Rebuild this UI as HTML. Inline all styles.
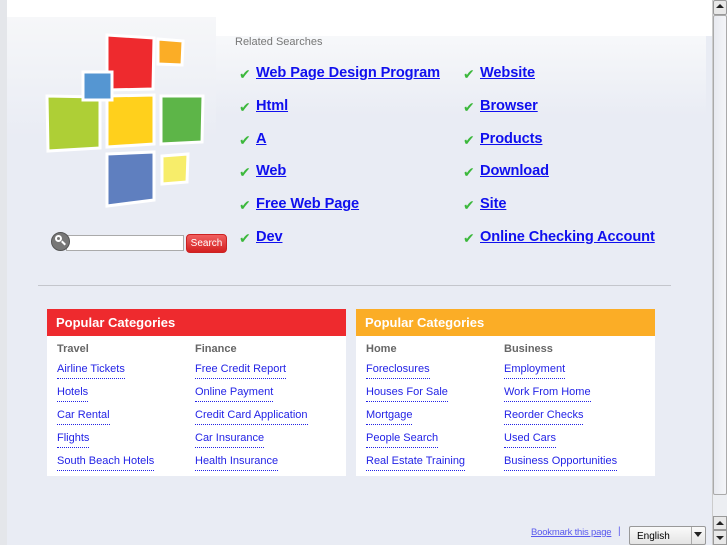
<!DOCTYPE html>
<html><head><meta charset="utf-8"><style>
*{margin:0;padding:0;box-sizing:border-box}
body{width:727px;height:545px;overflow:hidden;background:#e9ecf4;font-family:"Liberation Sans","DejaVu Sans",sans-serif;position:relative}
.a{position:absolute}
.rs{font-size:14.6px;font-weight:bold;color:#1010ee;text-decoration:underline;white-space:nowrap;letter-spacing:-0.1px}
.ck{color:#3cb83c;font-size:14px;font-weight:bold}
.box{position:absolute;top:309px;width:299px;height:167px;background:#fff}
.hd{height:27px;color:#fff;font-weight:bold;font-size:13px;padding:6px 0 0 9px}
.col{position:absolute;top:34px;font-size:11px}
.col b{display:block;color:#666;height:19px;font-size:11px}
.col a{display:block;color:#2323e6;text-decoration:none;border-bottom:1px dotted #2323e6;width:max-content;height:17px;margin-bottom:6px;line-height:15px}
</style></head><body>
<div class="a" style="left:0;top:0;width:712px;height:36px;background:#fff"></div>
<div class="a" style="left:0;top:0;width:7px;height:545px;background:#e4e6ea"></div>
<div class="a" style="left:7px;top:17px;width:209px;height:120px;background:linear-gradient(#f6f7f9,#e9ecf4)"></div>
<div class="a" style="left:216px;top:36px;width:490px;height:80px;background:linear-gradient(#f7f8fa,#e9ecf4)"></div>
<svg class="a" style="left:40px;top:30px" width="175" height="185" viewBox="0 0 175 185">
<g stroke="#fff" stroke-width="3">
<polygon points="67,5 114,8 113,59 67,60" fill="#ee2a2e"/>
<polygon points="118,9 143,11 142,35 118,34" fill="#fbad26"/>
<polygon points="7,66 60,67 60,118 8,121" fill="#aecf36"/>
<polygon points="67,66 114,65 114,114 67,117" fill="#ffd01c"/>
<polygon points="43,42 72,42 72,70 43,70" fill="#5596d2"/>
<polygon points="121,66 163,66 162,112 121,114" fill="#5db548"/>
<polygon points="67,124 114,122 114,170 67,176" fill="#5f7fbf"/>
<polygon points="122,126 148,124 147,152 122,154" fill="#f7ed6a"/>
</g></svg>
<div class="a" style="left:66px;top:235px;width:118px;height:16px;background:#fff;border:1px solid #aaa"></div>
<div class="a" style="left:51px;top:232px;width:19px;height:19px;border-radius:50%;background:#777;border:1px solid #555"></div>
<div class="a" style="left:55px;top:235px;width:7px;height:7px;border-radius:50%;border:2px solid #fff"></div>
<div class="a" style="left:61px;top:242px;width:5px;height:2px;background:#fff;transform:rotate(45deg)"></div>
<div class="a" style="left:186px;top:234px;width:41px;height:19px;border-radius:4px;background:linear-gradient(#f06060,#d42020);color:#fff;font-size:10px;text-align:center;line-height:17px;border:1px solid #c22">Search</div>
<div class="a" style="left:235px;top:36px;font-size:11px;color:#777">Related Searches</div>
<div class="a ck" style="left:239px;top:66px">✔</div><a class="a rs" style="left:256px;top:65px">Web Page Design Program</a>
<div class="a ck" style="left:239px;top:99px">✔</div><a class="a rs" style="left:256px;top:98px">Html</a>
<div class="a ck" style="left:239px;top:132px">✔</div><a class="a rs" style="left:256px;top:131px">A</a>
<div class="a ck" style="left:239px;top:164px">✔</div><a class="a rs" style="left:256px;top:163px">Web</a>
<div class="a ck" style="left:239px;top:197px">✔</div><a class="a rs" style="left:256px;top:196px">Free Web Page</a>
<div class="a ck" style="left:239px;top:230px">✔</div><a class="a rs" style="left:256px;top:229px">Dev</a>
<div class="a ck" style="left:463px;top:66px">✔</div><a class="a rs" style="left:480px;top:65px">Website</a>
<div class="a ck" style="left:463px;top:99px">✔</div><a class="a rs" style="left:480px;top:98px">Browser</a>
<div class="a ck" style="left:463px;top:132px">✔</div><a class="a rs" style="left:480px;top:131px">Products</a>
<div class="a ck" style="left:463px;top:164px">✔</div><a class="a rs" style="left:480px;top:163px">Download</a>
<div class="a ck" style="left:463px;top:197px">✔</div><a class="a rs" style="left:480px;top:196px">Site</a>
<div class="a ck" style="left:463px;top:230px">✔</div><a class="a rs" style="left:480px;top:229px">Online Checking Account</a>
<div class="a" style="left:38px;top:285px;width:633px;height:1px;background:#c4c6cc"></div>
<div class="box" style="left:47px"><div class="hd" style="background:#ee2a2e">Popular Categories</div>
<div class="col" style="left:10px"><b>Travel</b><a>Airline Tickets</a><a>Hotels</a><a>Car Rental</a><a>Flights</a><a>South Beach Hotels</a></div>
<div class="col" style="left:148px"><b>Finance</b><a>Free Credit Report</a><a>Online Payment</a><a>Credit Card Application</a><a>Car Insurance</a><a>Health Insurance</a></div></div>
<div class="box" style="left:356px"><div class="hd" style="background:#fbad26">Popular Categories</div>
<div class="col" style="left:10px"><b>Home</b><a>Foreclosures</a><a>Houses For Sale</a><a>Mortgage</a><a>People Search</a><a>Real Estate Training</a></div>
<div class="col" style="left:148px"><b>Business</b><a>Employment</a><a>Work From Home</a><a>Reorder Checks</a><a>Used Cars</a><a>Business Opportunities</a></div></div>
<div class="a" style="left:531px;top:527px;font-size:9.5px;color:#5a5aee;text-decoration:underline;letter-spacing:-0.2px">Bookmark this page</div>
<div class="a" style="left:618px;top:526px;font-size:10px;color:#5a5aee">|</div>
<div class="a" style="left:629px;top:526px;width:77px;height:19px;border:1px solid #999;border-radius:2px;background:linear-gradient(#fafafa,#e4e4e4);font-size:10px;padding:4px 0 0 7px">English</div>
<div class="a" style="left:691px;top:527px;width:1px;height:17px;background:#aaa"></div>
<div class="a" style="left:694px;top:532px;border:4px solid transparent;border-top:5px solid #222"></div>
<div class="a" style="left:712px;top:0;width:15px;height:545px;background:#eceef2;border-left:1px solid #ccc"></div>
<div class="a" style="left:713px;top:0;width:14px;height:15px;background:#e8e8e8;border:1px solid #999;border-radius:2px"></div>
<div class="a" style="left:716px;top:4px;border:4px solid transparent;border-bottom:4px solid #222;border-top:0"></div>
<div class="a" style="left:713px;top:15px;width:14px;height:480px;background:linear-gradient(90deg,#e8eaf0,#f4f5f8);border:1px solid #aaa;border-radius:2px"></div>
<div class="a" style="left:713px;top:516px;width:14px;height:14px;background:#e8e8e8;border:1px solid #999"></div>
<div class="a" style="left:716px;top:521px;border:4px solid transparent;border-bottom:4px solid #222;border-top:0"></div>
<div class="a" style="left:713px;top:530px;width:14px;height:15px;background:#e8e8e8;border:1px solid #999"></div>
<div class="a" style="left:716px;top:536px;border:4px solid transparent;border-top:4px solid #222;border-bottom:0"></div>
</body></html>
